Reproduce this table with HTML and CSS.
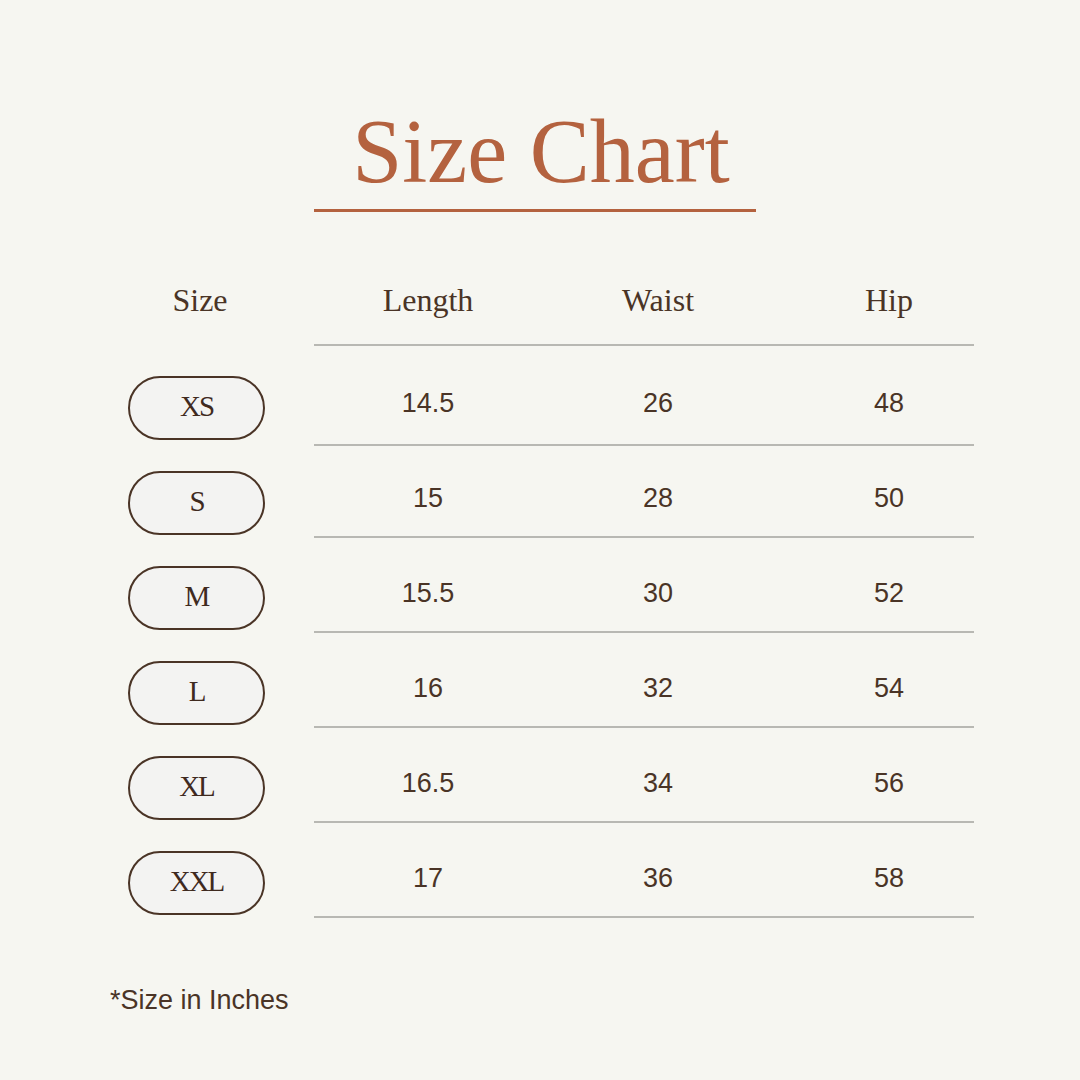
FILE: index.html
```html
<!DOCTYPE html>
<html lang="en">
<head>
<meta charset="utf-8">
<title>Size Chart</title>
<link rel="stylesheet" href="styles.css">
</head>
<body>
<main class="page">
  <h1 class="title">Size Chart</h1>

  <section class="chart">
    <div class="row head">
      <div class="size-col head-size">Size</div>
      <div class="cells">
        <div class="cell">Length</div>
        <div class="cell">Waist</div>
        <div class="cell">Hip</div>
      </div>
    </div>

    <div class="rows">
      <div class="row">
        <div class="size-col"><span class="pill">XS</span></div>
        <div class="cells"><div class="cell">14.5</div><div class="cell">26</div><div class="cell">48</div></div>
      </div>
      <div class="row">
        <div class="size-col"><span class="pill">S</span></div>
        <div class="cells"><div class="cell">15</div><div class="cell">28</div><div class="cell">50</div></div>
      </div>
      <div class="row">
        <div class="size-col"><span class="pill">M</span></div>
        <div class="cells"><div class="cell">15.5</div><div class="cell">30</div><div class="cell">52</div></div>
      </div>
      <div class="row">
        <div class="size-col"><span class="pill">L</span></div>
        <div class="cells"><div class="cell">16</div><div class="cell">32</div><div class="cell">54</div></div>
      </div>
      <div class="row">
        <div class="size-col"><span class="pill">XL</span></div>
        <div class="cells"><div class="cell">16.5</div><div class="cell">34</div><div class="cell">56</div></div>
      </div>
      <div class="row">
        <div class="size-col"><span class="pill">XXL</span></div>
        <div class="cells"><div class="cell">17</div><div class="cell">36</div><div class="cell">58</div></div>
      </div>
    </div>
  </section>

  <p class="note">*Size in Inches</p>
</main>
</body>
</html>
```

FILE: styles.css
```css
html, body {
  margin: 0;
  padding: 0;
  background: #f6f6f1;
}

.page {
  width: 1080px;
  height: 1080px;
  background: #f6f6f1;
  color: #4a3426;
  display: flex;
  flex-direction: column;
}

.title {
  margin: 102px 0 0 314px;
  width: 442px;
  padding: 0 0 7px 12px;
  box-sizing: border-box;
  border-bottom: 3px solid #b4623f;
  font-family: "Liberation Serif", "Times New Roman", serif;
  font-weight: normal;
  font-size: 90px;
  line-height: 100px;
  color: #b4623f;
  text-align: center;
}

.chart {
  margin-top: 68px;
  display: flex;
  flex-direction: column;
}

.row {
  display: flex;
  height: 95px;
}

.size-col {
  width: 137px;
  margin-left: 128px;
  padding-top: 28px;
  box-sizing: border-box;
}

.cells {
  width: 660px;
  margin-left: 49px;
  display: grid;
  grid-template-columns: 228px 232px 200px;
  border-bottom: 2px solid #b8b8b3;
}

.cells .cell:nth-child(3) {
  padding-left: 30px;
}

.cell {
  text-align: center;
  font-family: "Liberation Sans", Arial, sans-serif;
  font-size: 27px;
  line-height: 30px;
  padding-top: 40px;
  box-sizing: border-box;
}

.rows .row:first-child {
  height: 98px;
}

.rows .row:nth-child(2) {
  height: 92px;
}

.rows .row:nth-child(2) .size-col {
  padding-top: 25px;
}

.rows .row:nth-child(2) .cell {
  padding-top: 37px;
}

.head {
  height: 66px;
}

.head .size-col,
.head .cell {
  padding-top: 0;
  font-family: "Liberation Serif", "Times New Roman", serif;
  font-size: 32px;
  line-height: 40px;
  text-align: center;
}

.head-size {
  padding-left: 7px;
}

.rows {
  margin-top: 2px;
  display: flex;
  flex-direction: column;
}

.pill {
  display: flex;
  align-items: center;
  justify-content: center;
  box-sizing: border-box;
  width: 137px;
  height: 64px;
  padding-bottom: 4px;
  border: 2px solid #4a3426;
  border-radius: 32px;
  background: #f3f3f2;
  font-family: "Liberation Serif", "Times New Roman", serif;
  font-size: 29px;
  letter-spacing: -2px;
  color: #3f2a1f;
}

.note {
  margin: 67px 0 0 110px;
  font-family: "Liberation Sans", Arial, sans-serif;
  font-size: 27px;
  line-height: 30px;
  color: #4a3426;
}
```
